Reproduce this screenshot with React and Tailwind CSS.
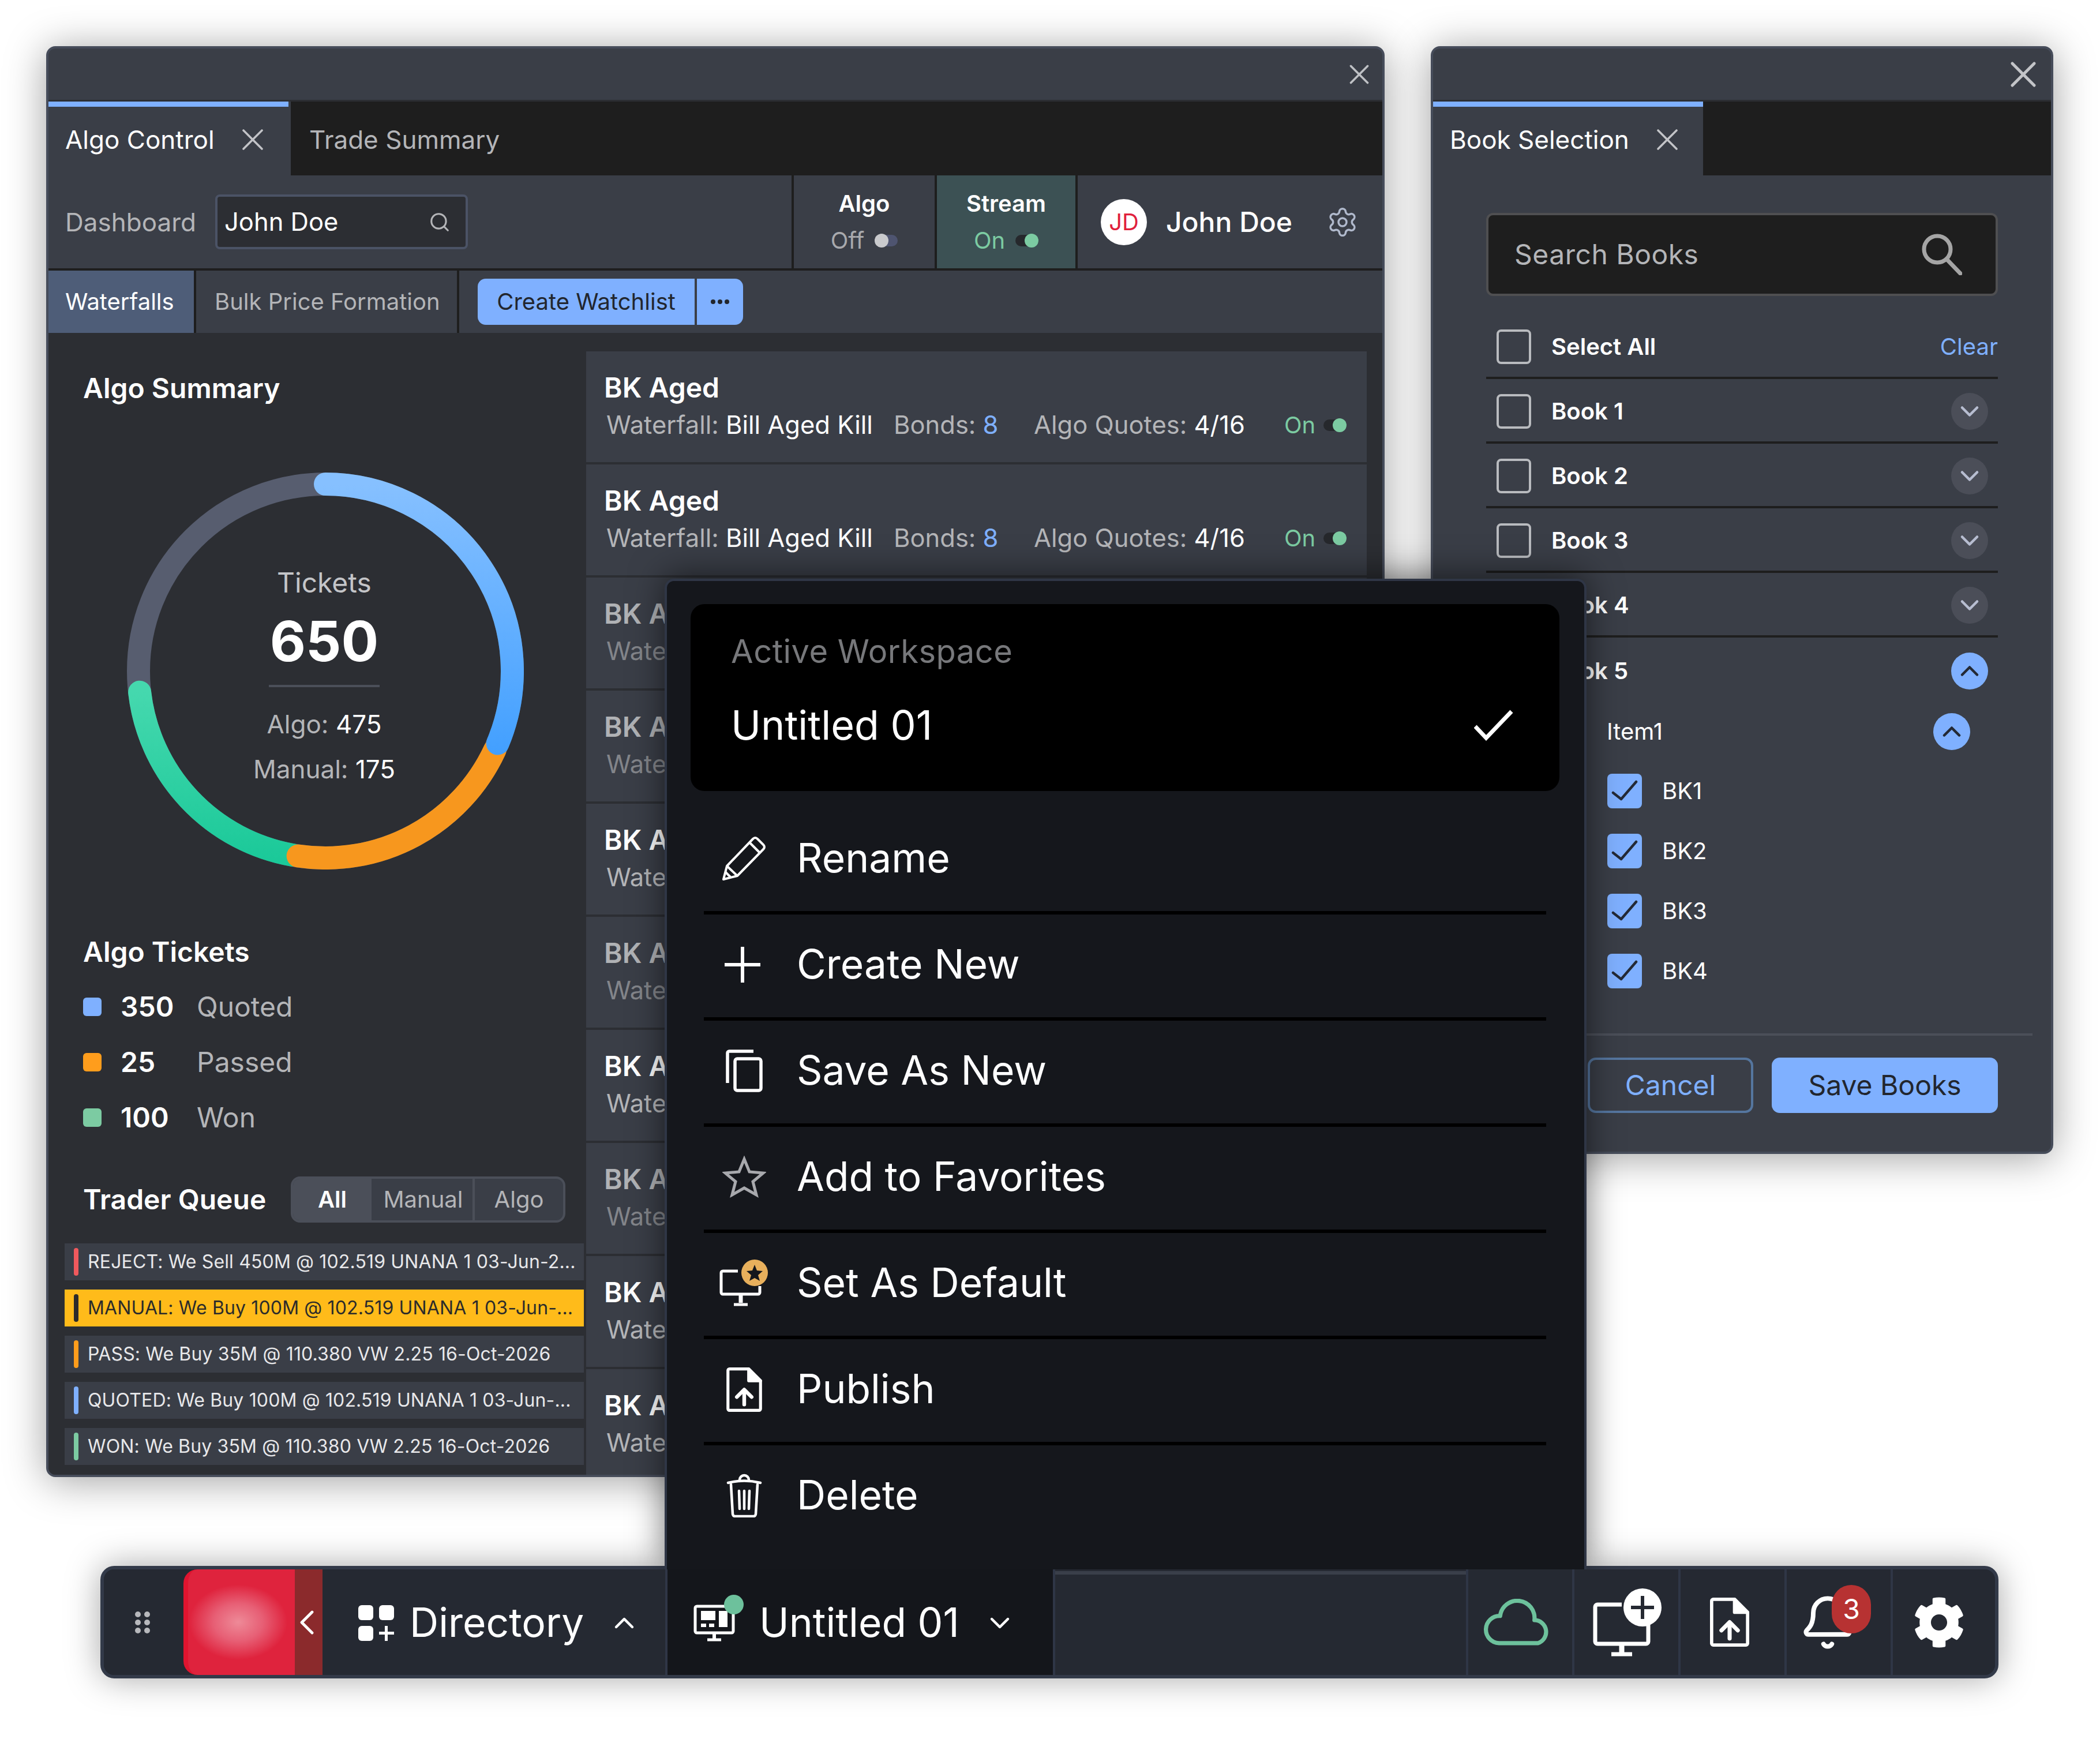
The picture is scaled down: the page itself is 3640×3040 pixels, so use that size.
import React from "react";
import { X, Search, Settings, ChevronUp, ChevronDown, ChevronLeft, Bell } from "lucide-react";
import { FaCog } from "react-icons/fa";

const rows = [false, false, true, true, false, true, false, true, false, false];

const queue = [
  { text: "REJECT: We Sell 450M @ 102.519 UNANA 1 03-Jun-2...", bar: "bg-[#f0595d]" },
  { text: "MANUAL: We Buy 100M @ 102.519 UNANA 1 03-Jun-...", bar: "bg-[#2b2b2b]", active: true },
  { text: "PASS: We Buy 35M @ 110.380 VW 2.25 16-Oct-2026", bar: "bg-[#ff9d1c]" },
  { text: "QUOTED: We Buy 100M @ 102.519 UNANA 1 03-Jun-...", bar: "bg-[#7fb0ff]" },
  { text: "WON: We Buy 35M @ 110.380 VW 2.25 16-Oct-2026", bar: "bg-[#7ccba2]" },
];

// polar point on the donut, angle clockwise from 12 o'clock
const pt = (deg) => {
  const r = (deg * Math.PI) / 180;
  return `${344 + 324 * Math.sin(r)} ${344 - 324 * Math.cos(r)}`;
};
const arc = (a, b) => `M${pt(a)} A324 324 0 ${b - a > 180 ? 1 : 0} 1 ${pt(b)}`;

const Toggle = ({ on }) => (
  <div className={`flex h-[20px] w-[40px] items-center rounded-full ${on ? "justify-end bg-[#26282c]" : "justify-start bg-[#4e5470]"}`}>
    <div className={`h-[24px] w-[24px] shrink-0 rounded-full ${on ? "bg-[#7ccba2]" : "bg-[#c9cacd]"}`} />
  </div>
);

const Box = ({ checked }) =>
  checked ? (
    <div className="flex h-[60px] w-[60px] shrink-0 items-center justify-center rounded-[8px] bg-[#7fb0ff]">
      <svg width="46" height="38" viewBox="0 0 46 38" fill="none" stroke="#242a36" strokeWidth="4.5" strokeLinecap="round" strokeLinejoin="round">
        <path d="M3 22 L17 33 L43 3" />
      </svg>
    </div>
  ) : (
    <div className="h-[60px] w-[60px] shrink-0 rounded-[8px] border-[4px] border-[#b9bbbf]" />
  );

const Round = ({ up }) =>
  up ? (
    <div className="flex h-[64px] w-[64px] items-center justify-center rounded-full bg-[#7fb0ff] text-[#242a36]">
      <ChevronUp size={52} strokeWidth={2.1} className="shrink-0" />
    </div>
  ) : (
    <div className="flex h-[64px] w-[64px] items-center justify-center rounded-full bg-[#4b4e58] text-[#b7bdd0]">
      <ChevronDown size={52} strokeWidth={2.1} className="shrink-0" />
    </div>
  );

const BookRow = ({ label, up, last }) => (
  <div className={`flex h-[112px] items-center pl-[18px] pr-[17px] pt-[4px] ${last ? "" : "border-b-[4px] border-[#1e1e1e]"}`}>
    <Box />
    <span className="ml-[35px] flex-1 text-[40px] font-semibold text-white">{label}</span>
    <Round up={up} />
  </div>
);

const FileUp = ({ w, h }) => (
  <svg width={w} height={h} viewBox="0 0 48 60" fill="none" stroke="white" strokeWidth="4" strokeLinejoin="round" strokeLinecap="round">
    <path d="M4 2 H30 L46 18 V56 a2 2 0 0 1 -2 2 H4 a2 2 0 0 1 -2 -2 V4 a2 2 0 0 1 2 -2 Z" />
    <path d="M30 2 L46 18 H30 Z" fill="white" />
    <path d="M24 50 V32" strokeWidth="5" />
    <path d="M14 40 L24 30 L34 40" strokeWidth="5" />
  </svg>
);

const menuItems = [
  {
    label: "Rename",
    icon: (
      <svg width="78" height="78" viewBox="0 0 78 78" fill="none" stroke="white" strokeWidth="4" strokeLinejoin="round">
        <path d="M3 75 L9 52 L54 5 Q58 1 62 5 L72 15 Q76 19 72 23 L27 69 Z" />
        <path d="M48 11 L66 29" />
        <path d="M9 52 L27 69" />
        <path d="M6 62 L15 71" />
      </svg>
    ),
  },
  {
    label: "Create New",
    icon: (
      <svg width="62" height="62" viewBox="0 0 62 62" fill="none" stroke="white" strokeWidth="6" className="-ml-[6px]">
        <path d="M31 0 V62 M0 31 H62" />
      </svg>
    ),
  },
  {
    label: "Save As New",
    icon: (
      <svg width="64" height="74" viewBox="0 0 64 74" fill="none" stroke="white" strokeWidth="5.5" strokeLinejoin="round">
        <path d="M48 3 H6 a3 3 0 0 0 -3 3 V58" />
        <rect x="16" y="16" width="45" height="55" rx="4" />
      </svg>
    ),
  },
  {
    label: "Add to Favorites",
    icon: (
      <svg width="76" height="74" viewBox="0 0 76 74" fill="none" stroke="#a8a9ad" strokeWidth="5" strokeLinejoin="miter">
        <path d="M38 6 L47 28 L71 30 L53 45 L59 68 L38 56 L17 68 L23 45 L5 30 L29 28 Z" />
      </svg>
    ),
  },
  {
    label: "Set As Default",
    icon: (
      <svg width="86" height="82" viewBox="0 0 86 82" fill="none" stroke="white" strokeWidth="5">
        <path d="M32 20 H6 a3 3 0 0 0 -3 3 V57 a3 3 0 0 0 3 3 H67 a3 3 0 0 0 3 -3 V46" />
        <path d="M37 60 V75" strokeWidth="7" />
        <path d="M25 78 H49" />
        <circle cx="61" cy="23" r="23" fill="#e8b05c" stroke="none" />
        <path d="M61 9 L65 19 L75 20 L67 27 L70 37 L61 32 L52 37 L55 27 L47 20 L57 19 Z" fill="#15171c" stroke="none" />
      </svg>
    ),
  },
  { label: "Publish", icon: <FileUp w={62} h={77} /> },
  {
    label: "Delete",
    icon: (
      <svg width="62" height="76" viewBox="0 0 62 76" fill="none" stroke="white" strokeWidth="4.5" strokeLinecap="round" strokeLinejoin="round">
        <path d="M3 16 Q31 9 59 16" />
        <path d="M23 11 a8 8 0 0 1 16 0" />
        <path d="M8 19 L11 70 a4 4 0 0 0 4 4 H47 a4 4 0 0 0 4 -4 L54 19" />
        <path d="M22 30 L23 61 M31 30 V61 M40 30 L39 61" />
      </svg>
    ),
  },
];

const App = () => {
  return (
    <div className="relative h-[3040px] w-[3640px] overflow-hidden bg-white leading-none text-white [font-family:Inter,sans-serif]">
      {/* Algo Control window */}
      <div className="absolute left-[80px] top-[80px] flex h-[2480px] w-[2320px] flex-col overflow-hidden rounded-[16px] border-[4px] border-[#464c5a] bg-[#3a3e47] shadow-[0_6px_70px_rgba(0,0,0,0.38)]">
        <div className="flex h-[92px] shrink-0 items-center justify-end border-b-[3px] border-[#2c2e33] pr-[11px]">
          <X size={58} strokeWidth={1.5} className="text-[#bfc1c5]" />
        </div>
        <div className="flex h-[128px] shrink-0 bg-[#1e1e1e]">
          <div className="w-[420px] bg-[#3a3e47]">
            <div className="h-[9px] w-[416px] bg-[#7fb0ff]" />
            <div className="flex h-[119px] items-center pb-[5px] pl-[29px] text-[44px]">
              Algo Control
              <X size={64} strokeWidth={1.35} className="ml-[34px] shrink-0 text-[#c3c4c8]" />
            </div>
          </div>
          <div className="flex items-center pb-[5px] pl-[32px] pt-[9px] text-[44px] text-[#b4b5b8]">Trade Summary</div>
        </div>

        <div className="flex h-[165px] shrink-0 border-b-[4px] border-[#1e1e1e]">
          <div className="flex flex-1 items-center pl-[29px]">
            <span className="w-[260px] text-[44px] text-[#b4b5b8]">Dashboard</span>
            <div className="flex h-[95px] w-[438px] items-center justify-between rounded-[8px] border-[4px] border-[#4b5366] bg-[#2c2e33] pl-[12px] pr-[26px] text-[43.5px]">
              John Doe
              <Search size={38} strokeWidth={2} className="text-[#b4b5b8]" />
            </div>
          </div>
          <div className="flex w-[248px] flex-col items-center justify-center gap-[24px] border-l-[4px] border-[#1e1e1e]">
            <span className="text-[40px] font-semibold">Algo</span>
            <div className="flex items-center gap-[18px] text-[40px] text-[#a8a9ad]">
              Off <Toggle />
            </div>
          </div>
          <div className="flex w-[244px] flex-col items-center justify-center gap-[24px] border-l-[4px] border-[#1e1e1e] bg-[#3c5154]">
            <span className="text-[40px] font-semibold">Stream</span>
            <div className="flex items-center gap-[18px] text-[40px] text-[#7ccba2]">
              On <Toggle on />
            </div>
          </div>
          <div className="flex w-[532px] items-center border-l-[4px] border-[#1e1e1e] pl-[40px]">
            <div className="flex h-[80px] w-[80px] items-center justify-center rounded-full bg-white text-[40px] text-[#e0203c]">JD</div>
            <span className="ml-[33px] flex-1 text-[48px] font-medium">John Doe</span>
            <Settings size={56} strokeWidth={1.5} className="mr-[41px] text-[#b0b9cc]" />
          </div>
        </div>

        <div className="flex h-[108px] shrink-0 items-center whitespace-nowrap text-[40px]">
          <div className="flex h-full w-[252px] items-center bg-[#4e5d78] pl-[29px]">Waterfalls</div>
          <div className="flex h-full w-[460px] items-center border-x-[4px] border-[#1e1e1e] pl-[32px] text-[#b4b5b8]">Bulk Price Formation</div>
          <div className="ml-[32px] flex h-[80px] overflow-hidden rounded-[14px] bg-[#7fb0ff] text-[#22262e]">
            <div className="flex w-[376px] items-center justify-center">Create Watchlist</div>
            <div className="flex w-[84px] items-center justify-center gap-[4px] border-l-[4px] border-[#3a3e47]">
              <span className="h-[8px] w-[8px] rounded-full bg-[#22262e]" />
              <span className="h-[8px] w-[8px] rounded-full bg-[#22262e]" />
              <span className="h-[8px] w-[8px] rounded-full bg-[#22262e]" />
            </div>
          </div>
        </div>

        <div className="flex min-h-0 flex-1 bg-[#2c2e33]">
          <div className="flex w-[932px] shrink-0 flex-col">
            <div className="pl-[60px] pt-[72px] text-[48px] font-semibold">Algo Summary</div>
            <div className="ml-[136px] mt-[122px] grid h-[688px] w-[688px] justify-items-center">
              <svg width="688" height="688" viewBox="0 0 688 688" fill="none" strokeWidth="40" strokeLinecap="round" className="col-start-1 row-start-1">
                <defs>
                  <linearGradient id="blue" x1="0" y1="20" x2="0" y2="510" gradientUnits="userSpaceOnUse">
                    <stop offset="0" stopColor="#86c0ff" />
                    <stop offset="1" stopColor="#3f9eff" />
                  </linearGradient>
                  <linearGradient id="green" x1="0" y1="380" x2="0" y2="670" gradientUnits="userSpaceOnUse">
                    <stop offset="0" stopColor="#45d8ae" />
                    <stop offset="1" stopColor="#1bc999" />
                  </linearGradient>
                </defs>
                <circle cx="344" cy="344" r="324" stroke="#575d6f" />
                <path d={arc(190, 263.5)} stroke="url(#green)" />
                <path d={arc(115, 188.4)} stroke="#f7971e" />
                <path d={arc(0, 112.8)} stroke="url(#blue)" />
              </svg>
              <div className="col-start-1 row-start-1 flex -translate-x-[2px] flex-col items-center pt-[167px]">
                <span className="text-[48px] text-[#c4c5c8]">Tickets</span>
                <span className="mt-[29px] text-[96px] font-bold">650</span>
                <div className="mt-[28px] h-[4px] w-[192px] bg-[#4b4f59]" />
                <div className="mt-[42px] text-[44px] text-[#b4b5b8]">
                  Algo: <span className="text-white">475</span>
                </div>
                <div className="mt-[34px] text-[44px] text-[#b4b5b8]">
                  Manual: <span className="text-white">175</span>
                </div>
              </div>
            </div>
            <div className="pl-[60px] pt-[119px] text-[48px] font-semibold">Algo Tickets</div>
            <div className="flex flex-col gap-[40px] pl-[60px] pt-[43px]">
              {[
                ["350", "Quoted", "bg-[#7fb0ff]"],
                ["25", "Passed", "bg-[#ff9d1c]"],
                ["100", "Won", "bg-[#7ccba2]"],
              ].map(([n, label, c]) => (
                <div key={label} className="flex h-[56px] items-center">
                  <div className={`h-[32px] w-[32px] rounded-[6px] ${c}`} />
                  <span className="ml-[33px] w-[132px] text-[48px] font-semibold">{n}</span>
                  <span className="text-[48px] text-[#b4b5b8]">{label}</span>
                </div>
              ))}
            </div>
            <div className="mt-[74px] flex items-center pl-[60px]">
              <span className="w-[360px] text-[48px] font-semibold">Trader Queue</span>
              <div className="flex h-[80px] w-[476px] overflow-hidden rounded-[16px] border-[4px] border-[#4b4f59] bg-[#3a3e47] text-[40px]">
                <div className="flex w-[136px] items-center justify-center bg-[#4b4f59] font-semibold">All</div>
                <div className="flex w-[179px] items-center justify-center border-r-[4px] border-[#4b4f59] pl-[4px] text-[#b4b5b8]">Manual</div>
                <div className="flex flex-1 items-center justify-center text-[#b4b5b8]">Algo</div>
              </div>
            </div>
            <div className="ml-[28px] mt-[36px] flex w-[900px] flex-col gap-[16px]">
              {queue.map((q) => (
                <div key={q.text} className={`flex h-[64px] items-center pl-[16px] ${q.active ? "bg-[#ffbb1a] text-[#2b2b2b]" : "bg-[#3a3e47] text-[#e8e8ea]"}`}>
                  <div className={`h-[48px] w-[8px] shrink-0 rounded-full ${q.bar}`} />
                  <span className="ml-[16px] whitespace-nowrap text-[32px] tracking-[0.15px]">{q.text}</span>
                </div>
              ))}
            </div>
          </div>

          <div className="flex min-w-0 flex-1 flex-col gap-[4px] pr-[27px] pt-[32px]">
            {rows.map((dim, i) => (
              <div key={i} className="flex h-[192px] shrink-0 flex-col bg-[#3a3e47] pl-[31px] pr-[33px]">
                <div className={`flex flex-col ${dim ? "opacity-60" : ""}`}>
                  <div className="pt-[39px] text-[48px] font-semibold">BK Aged</div>
                  <div className="mt-[19px] grid grid-cols-[498px_243px_434px_68px_1fr] items-center pl-[4px] text-[43.5px] text-[#b4b5b8]">
                    <div>
                      Waterfall: <span className="text-white">Bill Aged Kill</span>
                    </div>
                    <div>
                      Bonds: <span className="text-[#7fb0ff]">8</span>
                    </div>
                    <div>
                      Algo Quotes: <span className="text-white">4/16</span>
                    </div>
                    <div className="text-[40px] text-[#7ccba2]">On</div>
                    <Toggle on />
                  </div>
                </div>
              </div>
            ))}
          </div>
        </div>
      </div>

      {/* Book Selection window */}
      <div className="absolute left-[2480px] top-[80px] flex h-[1920px] w-[1079px] flex-col overflow-hidden rounded-[16px] border-[4px] border-[#464c5a] bg-[#3a3e47] shadow-[0_6px_70px_rgba(0,0,0,0.38)]">
        <div className="flex h-[92px] shrink-0 items-center justify-end border-b-[3px] border-[#2c2e33] pr-[10px]">
          <X size={76} strokeWidth={1.6} className="text-[#c3c4c8]" />
        </div>
        <div className="flex h-[128px] shrink-0 bg-[#1e1e1e]">
          <div className="w-[468px] bg-[#3a3e47]">
            <div className="h-[9px] bg-[#7fb0ff]" />
            <div className="flex h-[119px] items-center pb-[5px] pl-[29px] text-[44px]">
              Book Selection
              <X size={64} strokeWidth={1.35} className="ml-[34px] shrink-0 text-[#c3c4c8]" />
            </div>
          </div>
        </div>
        <div className="flex flex-1 flex-col px-[92px] pt-[65px]">
          <div className="flex h-[144px] shrink-0 items-center justify-between rounded-[12px] border-[4px] border-[#4f4f51] bg-[#1e1e1e] pl-[45px] pr-[58px] text-[48px] tracking-[0.5px] text-[#b4b5b8]">
            Search Books
            <svg width="70" height="72" viewBox="0 0 70 72" fill="none" stroke="#a5a5a5" strokeWidth="7">
              <circle cx="27" cy="27" r="23" />
              <path d="M43 44 L67 69" strokeLinecap="round" />
            </svg>
          </div>
          <div className="mt-[32px] flex h-[112px] items-center border-b-[4px] border-[#1e1e1e] pl-[18px] pt-[4px]">
            <Box />
            <span className="ml-[35px] flex-1 text-[40px] font-semibold">Select All</span>
            <span className="text-[40px] text-[#7fb0ff]">Clear</span>
          </div>
          <BookRow label="Book 1" />
          <BookRow label="Book 2" />
          <BookRow label="Book 3" />
          <BookRow label="Book 4" />
          <BookRow label="Book 5" up last />
          <div className="flex h-[102px] items-center pl-[114px] pr-[48px]">
            <Box />
            <span className="ml-[35px] flex-1 text-[40px]">Item1</span>
            <Round up />
          </div>
          {["BK1", "BK2", "BK3", "BK4"].map((b) => (
            <div key={b} className="flex h-[104px] items-center pl-[210px]">
              <Box checked />
              <span className="ml-[35px] text-[40px]">{b}</span>
            </div>
          ))}
          <div className="-mx-[60px] mt-[56px] h-[4px] shrink-0 bg-[#4b4f59]" />
          <div className="mt-[38px] flex justify-end gap-[32px] text-[48px]">
            <div className="flex h-[96px] w-[287px] items-center justify-center rounded-[14px] border-[4px] border-[#55769f] text-[#7fb0ff]">Cancel</div>
            <div className="flex h-[96px] w-[392px] items-center justify-center rounded-[14px] bg-[#7fb0ff] text-[#22262e]">Save Books</div>
          </div>
        </div>
      </div>

      {/* bottom toolbar */}
      <div className="absolute left-[174px] top-[2714px] flex h-[195px] w-[3290px] overflow-hidden rounded-[24px] border-[6px] border-[#333a49] bg-[#252932] shadow-[0_0_60px_rgba(0,0,0,0.35)]">
        <div className="relative z-30 grid w-[138px] shrink-0 grid-cols-[10px_10px] content-center justify-center gap-x-[6px] gap-y-[4px] bg-[#252932] pr-[4px]">
          {[0, 1, 2, 3, 4, 5].map((d) => (
            <span key={d} className="h-[10px] w-[10px] rounded-full bg-[#b7b8bc]" />
          ))}
        </div>
        <div className="relative z-30 w-[193px] shrink-0 rounded-l-[24px] border-l-[8px] border-[#e0142f] bg-[radial-gradient(ellipse_85px_65px_at_47%_50%,#ee8a98_0%,#e75f75_50%,#df233d_100%)]" />
        <div className="relative z-30 flex w-[48px] shrink-0 items-center justify-center bg-[#8b2a2c]">
          <ChevronLeft size={72} strokeWidth={1.6} className="shrink-0 -translate-x-[3px]" />
        </div>
        <div className="relative z-30 flex w-[594px] shrink-0 items-center bg-[#252932] pl-[62px] pt-[2px]">
          <svg width="62" height="62" viewBox="0 0 62 62" fill="white">
            <rect width="26" height="26" rx="6" />
            <rect x="36" width="26" height="26" rx="6" />
            <rect y="36" width="26" height="26" rx="6" />
            <path d="M46 36 H51 V46 H62 V51 H51 V62 H46 V51 H36 V46 H46 Z" />
          </svg>
          <span className="ml-[27px] text-[69.5px]">Directory</span>
          <ChevronUp size={56} strokeWidth={1.9} className="ml-[42px] shrink-0" />
        </div>
        <div className="relative z-30 flex w-[672px] shrink-0 items-center border-l-[4px] border-[#2f3646] bg-[#14161b] pl-[45px] pt-[2px]">
          <div className="relative h-[64px] w-[72px]">
            <svg width="72" height="64" viewBox="0 0 72 64" fill="none" stroke="white" strokeWidth="5">
              <rect x="3" y="3" width="66" height="46" rx="3" />
              <path d="M36 49 V60" strokeWidth="6" />
              <path d="M24 61 H48" />
              <path d="M13 11 H38 V27 H13 Z M44 11 H59 V39 H44 Z" fill="white" stroke="none" />
              <path d="M13 33 H22 V39 H13 Z M27 33 H36 V39 H27 Z" fill="white" stroke="none" />
            </svg>
            <div className="absolute -right-[15px] -top-[17px] h-[34px] w-[34px] rounded-full bg-[#6dc19c]" />
          </div>
          <span className="ml-[42px] text-[69.5px]">Untitled 01</span>
          <ChevronDown size={56} strokeWidth={1.9} className="ml-[42px] shrink-0" />
        </div>
        <div className="relative z-30 flex-1 border-l-[4px] border-[#2f3646] bg-[#252932] pt-[3px]">
          <div className="h-[6px] bg-[#3a3f4a]" />
        </div>
        <div className="relative z-30 flex h-full shrink-0 bg-[#252932]">
          <div className="flex w-[184px] items-center justify-center border-l-[4px] border-[#2f3646] pr-[6px]">
            <svg width="124" height="82" viewBox="0 0 118 80" fill="none" stroke="#6dc19c" strokeWidth="7" strokeLinejoin="round">
              <path d="M26 75 A23 23 0 0 1 28 29 A29 29 0 0 1 86 36 A20 20 0 0 1 92 75 Z" />
            </svg>
          </div>
          <div className="flex w-[184px] items-center justify-center border-l-[4px] border-[#2f3646] pl-[4px]">
            <svg width="120" height="118" viewBox="0 0 120 118" fill="none" stroke="white" strokeWidth="7">
              <path d="M50 28 H8 a4 4 0 0 0 -4 4 V92 a4 4 0 0 0 4 4 H92 a4 4 0 0 0 4 -4 V62" />
              <path d="M50 96 V112" strokeWidth="9" />
              <path d="M32 114 H68" />
              <circle cx="86" cy="33" r="33" fill="white" stroke="none" />
              <path d="M86 13 V53 M66 33 H106" stroke="#252932" strokeWidth="6" />
            </svg>
          </div>
          <div className="flex w-[184px] items-center justify-center border-l-[4px] border-[#2f3646] pr-[10px]">
            <FileUp w={68} h={87} />
          </div>
          <div className="flex w-[184px] items-center justify-center border-l-[4px] border-[#2f3646] pr-[38px]">
            <div className="relative">
              <Bell size={100} strokeWidth={1.9} />
              <div className="absolute -right-[25px] -top-[15px] flex h-[84px] w-[68px] items-center justify-center rounded-full bg-[#b73232] text-[48px]">3</div>
            </div>
          </div>
          <div className="flex w-[181px] items-center justify-center border-l-[4px] border-[#2f3646] pr-[18px]">
            <FaCog size={90} />
          </div>
        </div>
      </div>

      {/* workspace menu */}
      <div className="absolute left-[1152px] top-[1003px] z-20 h-[1720px] w-[1598px] rounded-t-[16px] border-x-[4px] border-t-[4px] border-[#2f3646] bg-[#15171c] shadow-[0_-6px_60px_rgba(0,0,0,0.55)]">
        <div className="ml-[41px] mt-[40px] flex h-[324px] w-[1506px] flex-col rounded-[24px] bg-black pl-[70px] pr-[80px] pt-[54px]">
          <span className="text-[56px] tracking-[0.5px] text-[#77787b]">Active Workspace</span>
          <div className="mt-[65px] flex items-center justify-between">
            <span className="text-[70px]">Untitled 01</span>
            <svg width="68" height="54" viewBox="0 0 68 54" fill="none" stroke="white" strokeWidth="7">
              <path d="M2 29 L21 49 L65 3" />
            </svg>
          </div>
        </div>
        <div className="ml-[64px] mt-[30px] w-[1460px]">
          {menuItems.map((m, i) => (
            <div key={m.label} className={`flex items-center pb-[4px] pl-[25px] ${i < menuItems.length - 1 ? "h-[184px] border-b-[6px] border-black" : "h-[178px]"}`}>
              <div className="flex w-[90px] items-center justify-center">{m.icon}</div>
              <span className="ml-[46px] text-[69.5px]">{m.label}</span>
            </div>
          ))}
        </div>
      </div>
    </div>
  );
};

export default App;
